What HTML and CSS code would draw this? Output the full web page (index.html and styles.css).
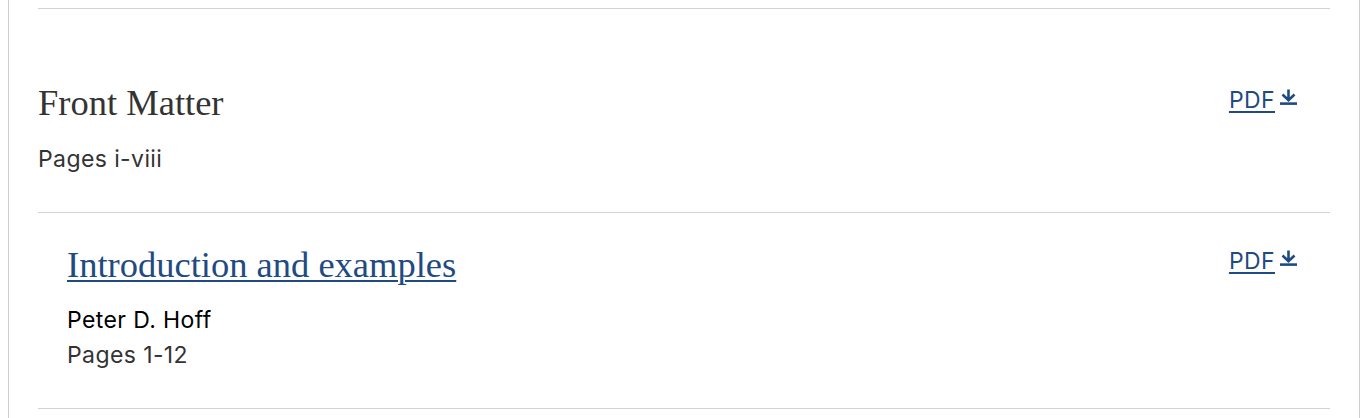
FILE: index.html
```html
<!DOCTYPE html>
<html lang="en">
<head>
<meta charset="utf-8">
<title>Contents</title>
<link rel="stylesheet" href="styles.css">
</head>
<body>
<div class="panel">
  <div class="item">
    <div class="info">
      <h2 class="title">Front Matter</h2>
      <div class="pages">Pages i-viii</div>
    </div>
    <a class="pdf" href="#">PDF</a><svg class="dl" width="17" height="18" viewBox="0 0 17 18"><path d="M8.5 0.5V11M2.5 5.5L8.5 11.2L14.5 5.5" fill="none" stroke="#1f4b82" stroke-width="2.6" stroke-linejoin="miter"/><rect x="0" y="13.3" width="17" height="2.6" fill="#1f4b82"/></svg>
  </div>
  <div class="item chapter">
    <div class="info">
      <h2 class="title"><a href="#">Introduction and examples</a></h2>
      <div class="author">Peter D. Hoff</div>
      <div class="pages">Pages 1-12</div>
    </div>
    <a class="pdf" href="#">PDF</a><svg class="dl" width="17" height="18" viewBox="0 0 17 18"><path d="M8.5 0.5V11M2.5 5.5L8.5 11.2L14.5 5.5" fill="none" stroke="#1f4b82" stroke-width="2.6" stroke-linejoin="miter"/><rect x="0" y="13.3" width="17" height="2.6" fill="#1f4b82"/></svg>
  </div>
</div>
</body>
</html>
```

FILE: styles.css
```css
html, body {
  margin: 0;
  padding: 0;
  background: #fff;
}
body {
  padding: 0 8px 0 8px;
  font-family: Inter, "Noto Sans", sans-serif;
  color: #333;
}
.panel {
  border-left: 1px solid #cfcfcf;
  border-right: 1px solid #cfcfcf;
  padding: 8px 29px 0 29px;
  min-height: 418px;
  box-sizing: border-box;
}
.item {
  display: flex;
  align-items: flex-start;
  border-top: 1px solid #d3d3d3;
  padding: 74px 33px 39px 0;
}
.item:last-child {
  border-bottom: 1px solid #d3d3d3;
}
.chapter {
  padding-top: 32px;
  padding-left: 29px;
  padding-bottom: 39px;
}
.info {
  flex: 1;
}
.title {
  margin: 0;
  font-family: "Liberation Serif", serif;
  font-weight: normal;
  font-size: 36.5px;
  line-height: 40px;
  color: #333;
}
.title a {
  color: #1f4b82;
  text-decoration: underline;
  text-decoration-thickness: 2px;
  text-underline-offset: 3px;
}
.pages {
  font-size: 23px;
  letter-spacing: 0.4px;
  line-height: 28px;
  color: #333;
  margin-top: 22px;
}
.author {
  font-size: 23px;
  letter-spacing: 0.4px;
  line-height: 28px;
  color: #000;
  margin-top: 21px;
}
.author + .pages {
  margin-top: 7px;
}
.pdf {
  font-size: 23px;
  letter-spacing: 0.4px;
  line-height: 28px;
  color: #1f4b82;
  text-decoration: underline;
  text-decoration-thickness: 2px;
  text-underline-offset: 3px;
  margin-top: 3px;
}
.chapter .pdf {
  margin-top: 2px;
}
.dl {
  display: block;
  margin-top: 6px;
  margin-left: 5px;
}
.chapter .dl {
  margin-top: 5px;
}
```
